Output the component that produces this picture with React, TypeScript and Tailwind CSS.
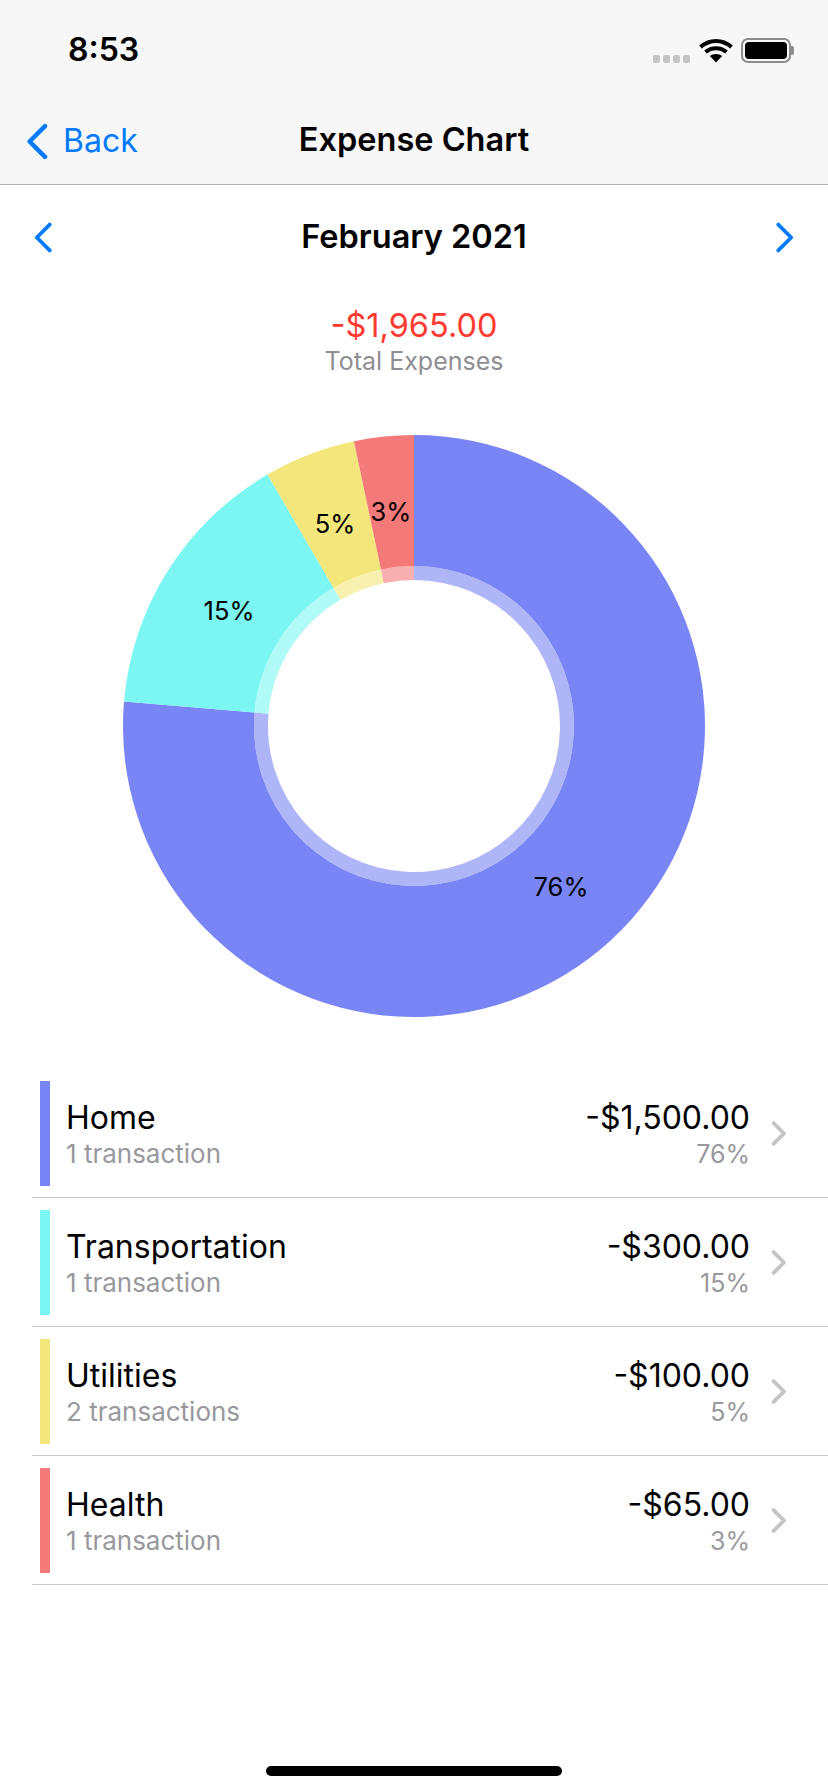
const rows = [
  { name: 'Home', count: '1 transaction', amount: '-$1,500.00', pct: '76%', bar: 'bg-[#7985f4]' },
  { name: 'Transportation', count: '1 transaction', amount: '-$300.00', pct: '15%', bar: 'bg-[#7bf6f3]' },
  { name: 'Utilities', count: '2 transactions', amount: '-$100.00', pct: '5%', bar: 'bg-[#f3e67a]' },
  { name: 'Health', count: '1 transaction', amount: '-$65.00', pct: '3%', bar: 'bg-[#f47a7a]' },
]

const pie = [
  { value: 1500, color: '#7985f4', label: '76%', x: 561, y: 886 },
  { value: 300, color: '#7bf6f3', label: '15%', x: 229, y: 610 },
  { value: 100, color: '#f3e67a', label: '5%', x: 335, y: 523 },
  { value: 65, color: '#f47a7a', label: '3%', x: 391, y: 511 },
]

const CX = 414
const CY = 726

function point(r: number, a: number) {
  return [CX + r * Math.sin(a), CY - r * Math.cos(a)]
}

function wedge(r0: number, r1: number, from: number, to: number) {
  const big = to - from > Math.PI ? 1 : 0
  const [ax, ay] = point(r1, from)
  const [bx, by] = point(r1, to)
  const [cx, cy] = point(r0, to)
  const [dx, dy] = point(r0, from)
  return `M${ax} ${ay}A${r1} ${r1} 0 ${big} 1 ${bx} ${by}L${cx} ${cy}A${r0} ${r0} 0 ${big} 0 ${dx} ${dy}Z`
}

function Donut() {
  const total = 1965
  let angle = 0
  const arcs = pie.map((s) => {
    const from = angle
    angle += (s.value / total) * Math.PI * 2
    return { ...s, from, to: angle }
  })
  return (
    <svg width="828" height="582" viewBox="0 435 828 582" className="block">
      {arcs.map((s) => (
        <g key={s.label}>
          <path d={wedge(160, 291, s.from, s.to)} fill={s.color} />
          <path d={wedge(146, 160, s.from, s.to)} fill={s.color} fillOpacity="0.6" />
        </g>
      ))}
      {arcs.map((s) => (
        <text
          key={s.label}
          x={s.x}
          y={s.y}
          textAnchor="middle"
          dominantBaseline="central"
          fontSize="25.5"
          fill="#000"
        >
          {s.label}
        </text>
      ))}
    </svg>
  )
}

function Chevron({ dir, className, weight = 3.6 }: { dir: 'left' | 'right'; className: string; weight?: number }) {
  return (
    <svg viewBox="0 0 18 30" className={className} fill="none" stroke="currentColor" strokeWidth={weight} strokeLinecap="round" strokeLinejoin="round">
      <path d={dir === 'left' ? 'M15.5 2.5 3 15l12.5 12.5' : 'M2.5 2.5 15 15 2.5 27.5'} />
    </svg>
  )
}

function StatusIcons() {
  return (
    <div className="flex items-center">
      <div className="flex gap-[3px] mt-[18px]">
        {[0, 1, 2, 3].map((i) => (
          <div key={i} className="w-[7px] h-[8px] rounded-[2px] bg-[#c4c4c4]" />
        ))}
      </div>
      <svg width="34" height="25" viewBox="0 0 34 25" className="ml-[9px]">
        <path d="M17 3C11 3 6 5.2 1.5 9" fill="none" stroke="#000" strokeWidth="4.2" />
        <path d="M17 3c6 0 11 2.2 15.5 6" fill="none" stroke="#000" strokeWidth="4.2" />
        <path d="M6.5 14c3-2.5 6.500-3.800 10.500-3.800s7.500 1.300 10.500 3.800" fill="none" stroke="#000" strokeWidth="4" />
        <path d="M17 24.500 10.800 18c1.800-1.400 3.900-2.100 6.200-2.100s4.400.7 6.200 2.100Z" fill="#000" />
      </svg>
      <div className="ml-[8px] flex items-center">
        <div className="w-[50px] h-[25px] rounded-[7px] border-2 border-[#8c8c8c] p-[2px]">
          <div className="w-full h-full rounded-[4px] bg-black" />
        </div>
        <div className="w-[3px] h-[9px] rounded-r-[2px] bg-[#8c8c8c]" />
      </div>
    </div>
  )
}

export default function App() {
  return (
    <div className="relative w-[828px] h-[1792px] bg-white overflow-hidden font-['Inter','Liberation_Sans',sans-serif] text-black">
      <header className="h-[185px] bg-[#f7f7f7] border-b border-[#b2b2b2]">
        <div className="h-[88px] flex items-start justify-between pl-[68px] pr-[34px] pt-[31px]">
          <span className="text-[32px] leading-[38px] font-semibold">8:53</span>
          <div className="pt-[6px]"><StatusIcons /></div>
        </div>
        <div className="relative h-[96px] flex items-center justify-center">
          <span className="text-[32.5px] leading-[40px] font-semibold mt-[8px]">Expense Chart</span>
          <div className="absolute left-[25px] top-[33px] flex items-center text-[#007aff]">
            <Chevron dir="left" className="w-[24px] h-[37px]" />
            <span className="ml-[14px] text-[32px] leading-[40px]">Back</span>
          </div>
        </div>
      </header>

      <div className="flex items-center justify-between px-[33px] pt-[36px] h-[68px]">
        <Chevron dir="left" className="w-[20px] h-[31px] text-[#007aff]" />
        <span className="text-[32.5px] leading-[40px] font-semibold -mt-[1px]">February 2021</span>
        <Chevron dir="right" className="w-[20px] h-[31px] text-[#007aff]" />
      </div>

      <div className="flex flex-col items-center mt-[54px]">
        <span className="text-[32.5px] leading-[38px] text-[#ff3b30]">-$1,965.00</span>
        <span className="text-[25px] leading-[33px] text-[#8e8e93]">Total Expenses</span>
      </div>

      <div className="mt-[57px]">
        <Donut />
      </div>

      <div className="ml-[32px] mt-[52px]">
        {rows.map((r) => (
          <div key={r.name} className="h-[129px] border-b border-[#c8c8c8] flex items-center pl-[8px] pr-[41px]">
            <div className={`w-[10px] h-[105px] ${r.bar}`} />
            <div className="ml-[16px] pt-[2px] flex-1">
              <div className="text-[32px] leading-[39px]">{r.name}</div>
              <div className="text-[26px] leading-[34px] text-[#98989d]">{r.count}</div>
            </div>
            <div className="text-right pt-[2px]">
              <div className="text-[32px] leading-[39px]">{r.amount}</div>
              <div className="text-[25px] leading-[34px] text-[#98989d]">{r.pct}</div>
            </div>
            <Chevron dir="right" weight={4.5} className="ml-[21px] w-[16px] h-[25px] text-[#c4c4c7]" />
          </div>
        ))}
      </div>

      <div className="absolute left-[266px] bottom-[16px] w-[296px] h-[10px] rounded-full bg-black" />
    </div>
  )
}
